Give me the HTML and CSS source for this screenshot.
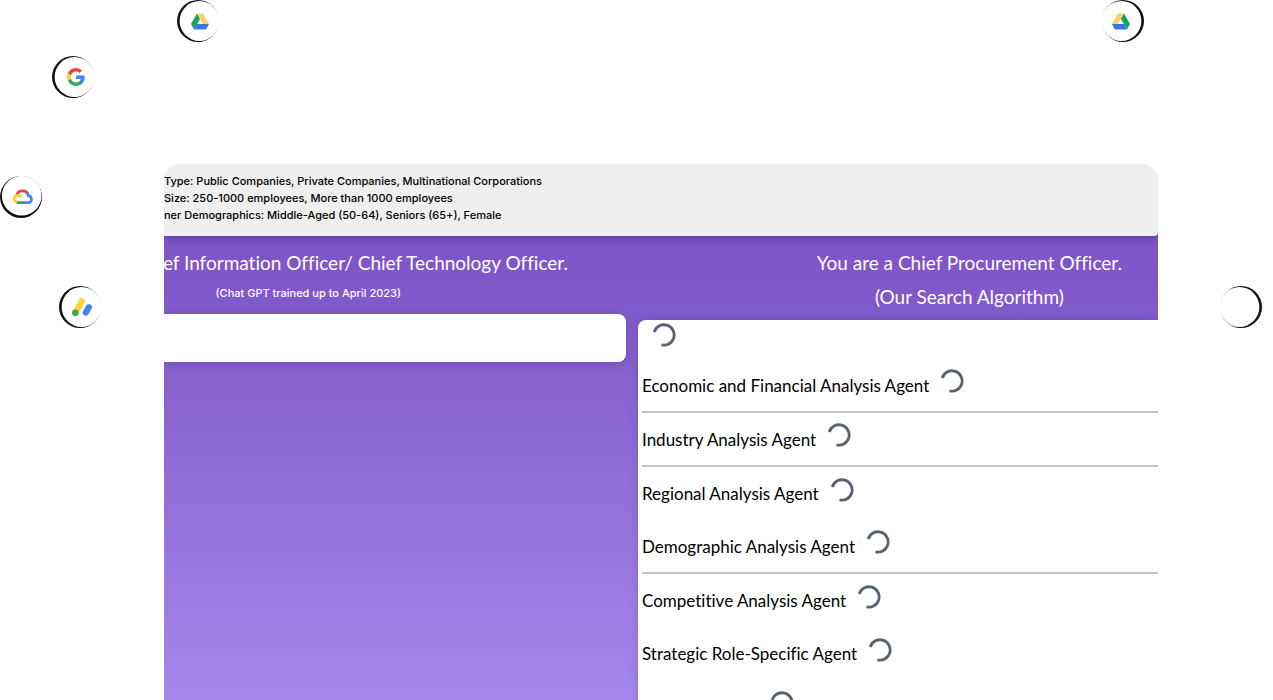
FILE: index.html
```html
<!DOCTYPE html>
<html lang="en">
<head>
<meta charset="utf-8">
<title>Analysis Agents</title>
<link rel="stylesheet" href="styles.css">
</head>
<body>
<svg class="defs" aria-hidden="true">
  <symbol id="spinner" viewBox="0 0 24 24"><path d="M2.200 9A10.200 10.200 0 1 1 9.500 21.900" fill="none" stroke="#59636f" stroke-width="2.800"/></symbol>
  <symbol id="drive" viewBox="0 0 18 16"><path d="M6 0 0 10.600 3 16 9.100 5.300z" fill="#11a861"/><path d="M6 0h6l6 10.600h-6z" fill="#ffcf63"/><path d="M6 10.600h12L15 16H3z" fill="#3777e3"/></symbol>
  <symbol id="ring" viewBox="0 0 42 42"><circle cx="21" cy="21" r="21" fill="#111"/><circle cx="22.500" cy="21" r="19.900" fill="#fff"/></symbol>
</svg>

<div class="badge badge-drive-left">
  <svg class="ring" aria-hidden="true"><use href="#ring"/></svg>
  <svg class="logo" aria-hidden="true"><use href="#drive"/></svg>
</div>
<div class="badge badge-drive-right">
  <svg class="ring flip" aria-hidden="true"><use href="#ring"/></svg>
  <svg class="logo flip" aria-hidden="true"><use href="#drive"/></svg>
</div>
<div class="badge badge-google">
  <svg class="ring" aria-hidden="true"><use href="#ring"/></svg>
  <svg class="logo logo-google" viewBox="0 0 24 24" aria-hidden="true"><path d="M23.500 12.300c0-.8-.1-1.600-.2-2.300H12v4.500h6.500c-.3 1.500-1.100 2.800-2.400 3.600v3h3.900c2.200-2.100 3.500-5.200 3.500-8.800z" fill="#4285f4"/><path d="M12 24c3.200 0 6-1.100 8-2.900l-3.900-3c-1.100.7-2.500 1.200-4.100 1.200-3.100 0-5.800-2.100-6.700-5H1.300v3.100C3.300 21.300 7.300 24 12 24z" fill="#34a853"/><path d="M5.300 14.300a7.200 7.200 0 0 1 0-4.600V6.600H1.300a12 12 0 0 0 0 10.800z" fill="#fdd22f"/><path d="M12 4.800c1.800 0 3.300.6 4.600 1.800L20 3.200A12 12 0 0 0 1.300 6.600l4 3.100c.9-2.900 3.600-4.900 6.700-4.900z" fill="#ea4335"/></svg>
</div>
<div class="badge badge-cloud">
  <svg class="ring" viewBox="0 0 42 42" aria-hidden="true"><circle cx="21" cy="21" r="21" fill="#111"/><circle cx="21.700" cy="19.700" r="19.800" fill="#fff"/></svg>
  <svg class="logo logo-wide" viewBox="0 0 20 14" fill="none" stroke-width="2.700" aria-hidden="true"><path d="M3.800 5.200C5 0 12.500-.4 14.600 3.600" stroke="#ea4335"/><path d="M14.200 2.800c.8.900 1 1.800 1.100 2.900 4.400.8 4.100 6.900-.3 6.900h-5" stroke="#4285f4"/><path d="M10.400 12.600H5.300c-.8 0-1.300-.2-1.900-.5" stroke="#34a853"/><path d="M3.700 12.300C-.2 10.500.9 5.100 5 5.300c1.500 0 2.600.8 3.500 1.700" stroke="#fdd22f"/></svg>
</div>
<div class="badge badge-adsense">
  <svg class="ring" aria-hidden="true"><use href="#ring"/></svg>
  <svg class="logo logo-wide" viewBox="0 0 20 18" fill="none" stroke-width="6.200" stroke-linecap="round" aria-hidden="true"><path d="M3.500 14.700 9.800 3.200" stroke="#fdd633"/><path d="M13.800 14.600 16.800 9.200" stroke="#4285f4"/><circle cx="3.300" cy="14.800" r="3.200" fill="#34a853" stroke="none"/></svg>
</div>
<div class="badge badge-empty">
  <svg class="ring flip" aria-hidden="true"><use href="#ring"/></svg>
</div>

<main class="panel">
  <header class="summary">
    <p>Type: Public Companies, Private Companies, Multinational Corporations</p>
    <p>Size: 250-1000 employees, More than 1000 employees</p>
    <p>ner Demographics: Middle-Aged (50-64), Seniors (65+), Female</p>
  </header>
  <div class="columns">
    <section class="column-gpt">
      <div class="heading-gpt">
        <h2>ef Information Officer/ Chief Technology Officer.</h2>
        <p>(Chat GPT trained up to April 2023)</p>
      </div>
      <div class="answer"></div>
    </section>
    <section class="column-search">
      <div class="heading-search">
        <h2>You are a Chief Procurement Officer.</h2>
        <h2>(Our Search Algorithm)</h2>
      </div>
      <ul class="agents">
        <li class="first"><svg class="spinner"><use href="#spinner"/></svg></li>
        <li class="ruled">Economic and Financial Analysis Agent<svg class="spinner"><use href="#spinner"/></svg></li>
        <li class="ruled">Industry Analysis Agent<svg class="spinner"><use href="#spinner"/></svg></li>
        <li>Regional Analysis Agent<svg class="spinner"><use href="#spinner"/></svg></li>
        <li class="ruled">Demographic Analysis Agent<svg class="spinner"><use href="#spinner"/></svg></li>
        <li>Competitive Analysis Agent<svg class="spinner"><use href="#spinner"/></svg></li>
        <li>Strategic Role-Specific Agent<svg class="spinner"><use href="#spinner"/></svg></li>
        <li class="last"><svg class="spinner"><use href="#spinner"/></svg></li>
      </ul>
    </section>
  </div>
</main>
</body>
</html>
```
FILE: styles.css
```css
* { box-sizing: border-box; }
body {
  margin: 0;
  height: 100vh;
  overflow: hidden;
  position: relative;
  display: flex;
  padding: 164px 115px 0 164px;
  background: #fff;
  color: #000;
  font-family: Lato, "Open Sans", sans-serif;
  font-variant-ligatures: none;
}
h2, p, ul { margin: 0; padding: 0; }
.defs { position: absolute; width: 0; height: 0; }

.badge {
  position: absolute;
  width: 42px;
  height: 42px;
  display: grid;
  place-items: center;
}
.badge > * { grid-area: 1 / 1; }
.ring { width: 42px; height: 42px; }
.logo { width: 18px; height: 17px; margin-left: 4px; }
.logo-google { height: 18px; margin-left: 6px; }
.logo-wide { width: 20px; height: 18px; }
.flip { transform: scaleX(-1); }
.logo.flip { margin: 0 4px 0 0; }
.badge-drive-left { left: 177px; top: 0; }
.badge-drive-right { right: 129px; top: 0; }
.badge-google { left: 52px; top: 56px; }
.badge-cloud { left: 0; top: 176px; }
.badge-adsense { left: 59px; top: 286px; }
.badge-empty { right: 11px; top: 286px; }

.panel {
  flex: 1;
  display: flex;
  flex-direction: column;
  overflow: hidden;
  border-radius: 16px 16px 0 0;
  background: linear-gradient(transparent 20px, #7b50c4 20px, #8059ca 25%, #8c66d2 48%, #a588ee);
}
.summary {
  padding: 9px 0 12px;
  background: #efefef;
  border-radius: 0 0 4px 0;
  box-shadow: 0 2px 10px rgba(0, 0, 0, 0.25);
  font: 500 11px/16px Inter, sans-serif;
  white-space: nowrap;
}
.summary p { padding-bottom: 1px; }
.columns {
  flex: 1;
  min-height: 0;
  display: grid;
  grid-template-columns: 462fr 520fr;
  gap: 12px;
}
.column-gpt, .column-search { min-width: 0; white-space: nowrap; }
h2 { font-size: 19px; line-height: 34px; font-weight: 400; color: #fff; }
.heading-gpt {
  display: flex;
  flex-direction: column;
  align-items: flex-end;
  padding: 10px 58px 8px 0;
}
.heading-gpt p {
  padding-right: 167px;
  color: #fff;
  font: 500 11px/26px Inter, sans-serif;
}
.answer {
  height: 48px;
  background: #fff;
  border-radius: 0 8px 8px 0;
  box-shadow: 0 2px 10px rgba(0, 0, 0, 0.15);
}
.heading-search {
  display: grid;
  justify-content: end;
  justify-items: center;
  padding: 10px 36px 6px 0;
}
.agents {
  list-style: none;
  padding-left: 4px;
  min-height: 400px;
  background: #fff;
  border-radius: 8px 0 0 0;
  box-shadow: 0 0 8px rgba(0, 0, 0, 0.15);
  font-size: 17px;
}
.agents li {
  height: 53px;
  display: flex;
  align-items: center;
  gap: 11px;
}
.agents .ruled { height: 54px; border-bottom: 2px solid #c4c4c4; }
.agents .first { height: 39px; padding: 0 0 2px 10px; }
.agents .last { padding-left: 128px; }
.spinner { width: 24px; height: 24px; flex: none; margin-bottom: 8px; }
```
